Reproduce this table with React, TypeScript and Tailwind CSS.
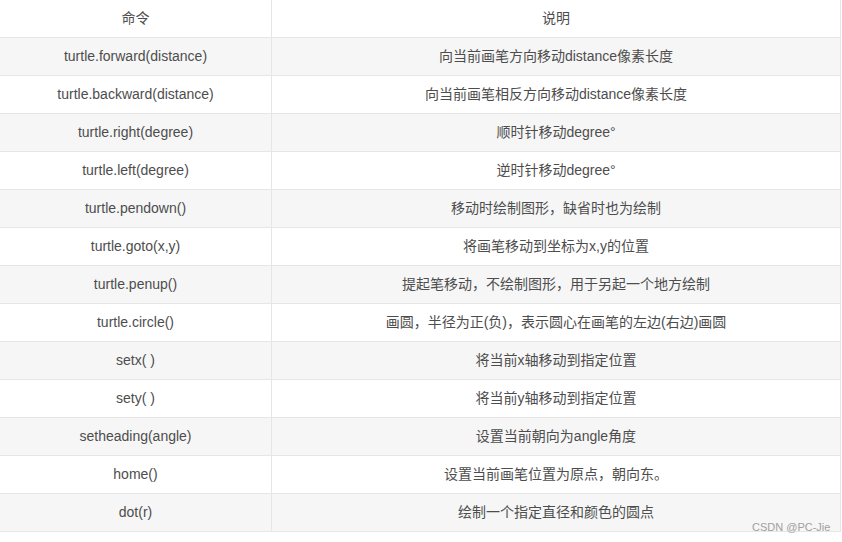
const rows: [string, string][] = [
  ['turtle.forward(distance)', '向当前画笔方向移动distance像素长度'],
  ['turtle.backward(distance)', '向当前画笔相反方向移动distance像素长度'],
  ['turtle.right(degree)', '顺时针移动degree°'],
  ['turtle.left(degree)', '逆时针移动degree°'],
  ['turtle.pendown()', '移动时绘制图形，缺省时也为绘制'],
  ['turtle.goto(x,y)', '将画笔移动到坐标为x,y的位置'],
  ['turtle.penup()', '提起笔移动，不绘制图形，用于另起一个地方绘制'],
  ['turtle.circle()', '画圆，半径为正(负)，表示圆心在画笔的左边(右边)画圆'],
  ['setx( )', '将当前x轴移动到指定位置'],
  ['sety( )', '将当前y轴移动到指定位置'],
  ['setheading(angle)', '设置当前朝向为angle角度'],
  ['home()', '设置当前画笔位置为原点，朝向东。'],
  ['dot(r)', '绘制一个指定直径和颜色的圆点'],
]

export default function App() {
  return (
    <div className="relative w-[842px] h-[542px] bg-white text-[14px] text-[#4d4d4d] font-['Liberation_Sans','Noto_Sans_CJK_SC',sans-serif]">
      <div className="w-[841px] border-r border-[#e6e6e6]">
        <div className="flex h-[38px] border-b border-[#e6e6e6] bg-white">
          <div className="w-[272px] flex items-center justify-center border-r border-[#e6e6e6]">命令</div>
          <div className="flex-1 flex items-center justify-center">说明</div>
        </div>
        {rows.map(([cmd, desc], i) => (
          <div
            key={cmd}
            className={`flex h-[38px] border-b border-[#e6e6e6] ${i % 2 === 0 ? 'bg-[#f6f6f6]' : 'bg-white'}`}
          >
            <div className="w-[272px] flex items-center justify-center border-r border-[#e6e6e6]">{cmd}</div>
            <div className="flex-1 flex items-center justify-center">{desc}</div>
          </div>
        ))}
      </div>
      <div className="absolute left-[752px] top-[521px] text-[11px] leading-[13px] text-[#a0a0a0]">CSDN @PC-Jie</div>
    </div>
  )
}
